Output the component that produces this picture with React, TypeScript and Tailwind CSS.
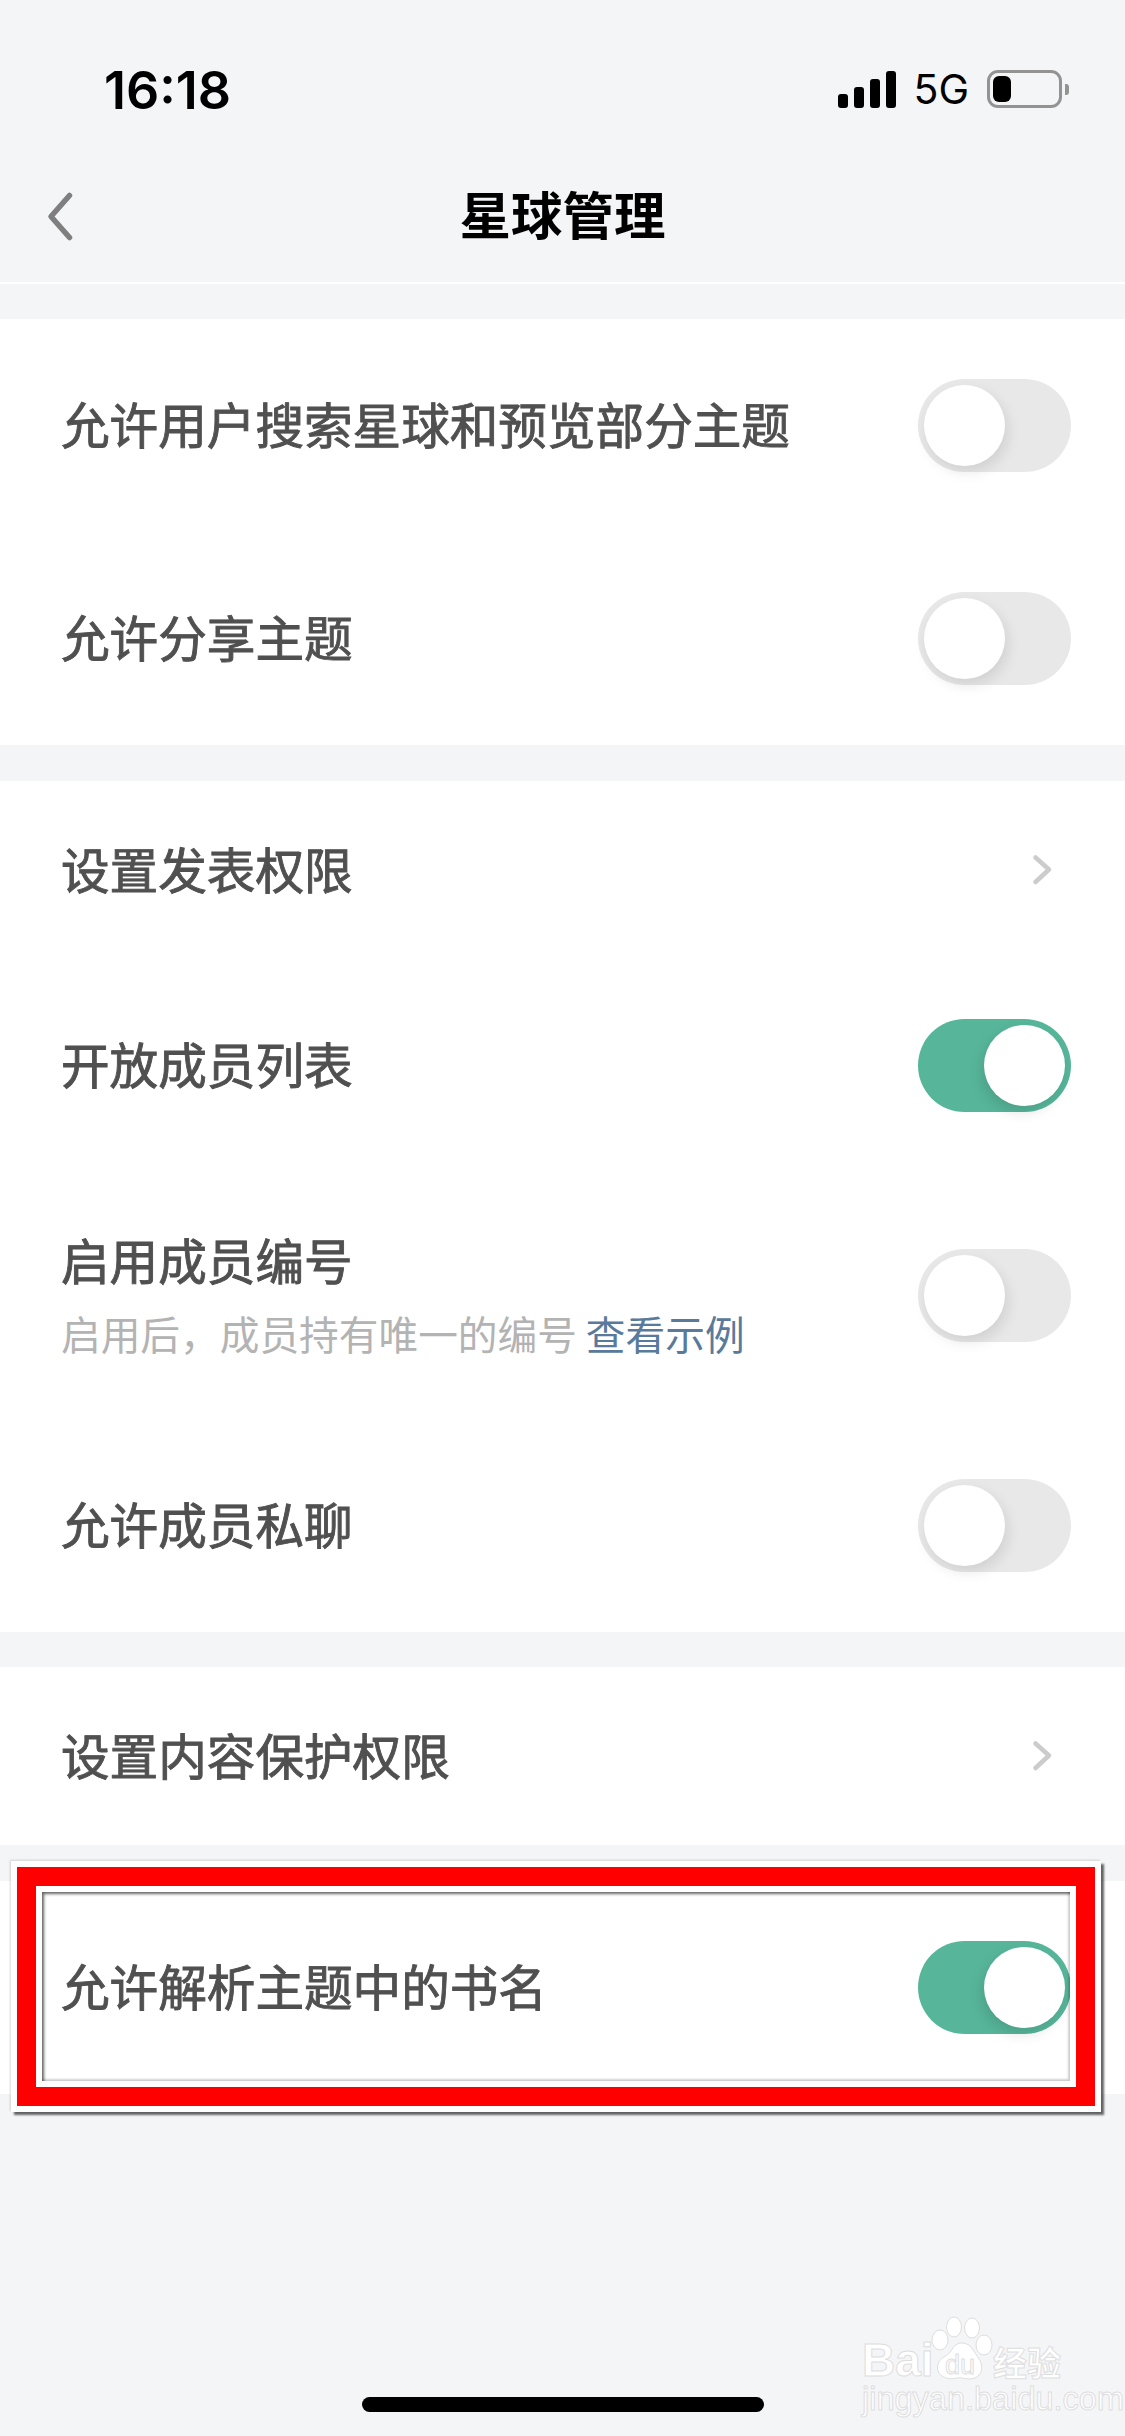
const font = "font-['Noto_Sans_CJK_SC','Noto_Sans',sans-serif]";

function Toggle({ on = false }: { on?: boolean }) {
  return (
    <div
      className={`relative h-[93px] w-[153px] shrink-0 rounded-full ${on ? "bg-[#57b69a]" : "bg-[#e8e8e8]"}`}
    >
      <div
        className={`absolute top-[6px] h-[81px] w-[81px] rounded-full bg-white ${
          on
            ? "right-[6px] shadow-[-3px_6px_14px_rgba(0,0,0,0.12)]"
            : "left-[6px] shadow-[3px_6px_14px_rgba(0,0,0,0.1)]"
        }`}
      />
    </div>
  );
}

function Chevron() {
  return (
    <svg width="22" height="32" viewBox="0 0 22 32" fill="none" className="mr-[17px]">
      <path d="M3.5 3.5 L17 15.5 L3.5 28" stroke="#cccccc" strokeWidth="4.5" strokeLinecap="round" strokeLinejoin="round" />
    </svg>
  );
}

function Row({
  label,
  h,
  on,
  chevron,
  children,
}: {
  label: string;
  h: string;
  on?: boolean;
  chevron?: boolean;
  children?: React.ReactNode;
}) {
  return (
    <div className={`flex items-center justify-between pl-[61px] pr-[54px] ${h}`}>
      <div className="-mt-[5px]">
        <div className="text-[48.6px] leading-[60px] text-[#505050] [-webkit-text-stroke:0.9px_#505050]">{label}</div>
        {children}
      </div>
      {chevron ? <Chevron /> : <Toggle on={on} />}
    </div>
  );
}

function StatusBar() {
  return (
    <div className="flex h-[172px] items-start justify-between pt-[63px] pl-[104px] pr-[63px]">
      <span className="font-['Inter',sans-serif] text-[52px] leading-[56px] font-semibold text-black">
        16:18
      </span>
      <div className="flex items-center pt-[7px]">
        <div className="flex items-end gap-[6px]">
          <div className="h-[14px] w-[10px] rounded-[3px] bg-black" />
          <div className="h-[21px] w-[10px] rounded-[3px] bg-black" />
          <div className="h-[29px] w-[10px] rounded-[3px] bg-black" />
          <div className="h-[37px] w-[10px] rounded-[3px] bg-black" />
        </div>
        <span className="ml-[17px] font-['Inter',sans-serif] text-[41px] leading-[38px] text-black">5G</span>
        <div className="relative ml-[18px] h-[38px] w-[75px] rounded-[11px] border-[3px] border-[#939393] p-[3px]">
          <div className="h-full w-[18px] rounded-[6px] bg-black" />
          <div className="absolute top-[11px] right-[-10px] h-[11px] w-[4px] rounded-r-[3px] bg-[#939393]" />
        </div>
      </div>
    </div>
  );
}

function Watermark() {
  return (
    <div className="pointer-events-none absolute top-[2316px] left-[860px] h-[96px] w-[206px] text-white [-webkit-text-stroke:1px_#dedede]">
      <span className="absolute top-[22px] left-[2px] font-['Liberation_Sans',sans-serif] text-[46px] leading-[44px] font-bold">
        Bai
      </span>
      <svg width="62" height="66" viewBox="0 0 62 66" className="absolute top-0 left-[71px]">
        <g fill="#ffffff" stroke="#dedede" strokeWidth="1">
          <ellipse cx="9" cy="24" rx="8" ry="10" />
          <ellipse cx="23" cy="11" rx="7.5" ry="10" />
          <ellipse cx="41" cy="12" rx="7.5" ry="10" />
          <ellipse cx="53" cy="29" rx="8" ry="10" />
          <path d="M31 27 C40 27 43 36 48 43 C54 52 50 63 38 63 C33 63 30 61 26 62 C14 65 4 58 7 48 C9 41 16 41 20 35 C23 30 26 27 31 27 Z" />
        </g>
      </svg>
      <span className="absolute top-[35px] left-[85px] font-['Liberation_Sans',sans-serif] text-[27px] leading-[28px]">
        du
      </span>
      <span className={`absolute top-[28px] left-[133px] text-[34px] leading-[36px] font-bold ${font}`}>经验</span>
      <span className="absolute top-[69px] left-[2px] font-['Liberation_Sans',sans-serif] text-[32.5px] leading-[28px]">
        jingyan.baidu.com
      </span>
    </div>
  );
}

export default function App() {
  return (
    <div className={`relative h-[2436px] w-[1125px] overflow-hidden bg-[#f4f5f7] ${font}`}>
      <header className="h-[284px] border-b-2 border-white">
        <StatusBar />
        <div className="relative flex h-[86px] items-center justify-center">
          <svg width="30" height="52" viewBox="0 0 30 52" fill="none" className="absolute top-[18px] left-[46px]">
            <path d="M23.5 5.5 L5 26.5 L23.5 47.5" stroke="#7f7f7f" strokeWidth="5.5" strokeLinecap="round" strokeLinejoin="round" />
          </svg>
          <h1 className="-mt-[4px] text-[51.5px] leading-[60px] font-bold text-black">星球管理</h1>
        </div>
      </header>

      <section className="mt-[35px] bg-white">
        <Row label="允许用户搜索星球和预览部分主题" h="h-[213px]" />
        <Row label="允许分享主题" h="h-[213px]" />
      </section>

      <section className="mt-[36px] bg-white">
        <Row label="设置发表权限" h="h-[178px]" chevron />
        <Row label="开放成员列表" h="h-[213px]" on />
        <Row label="启用成员编号" h="h-[246px]">
          <div className="mt-[20px] text-[39.7px] leading-[48px] text-[#b3b3b3]">
            启用后，成员持有唯一的编号 <span className="text-[#5a7a9c]">查看示例</span>
          </div>
        </Row>
        <Row label="允许成员私聊" h="h-[214px]" />
      </section>

      <section className="mt-[35px] bg-white">
        <Row label="设置内容保护权限" h="h-[178px]" chevron />
      </section>

      <section className="mt-[36px] bg-white">
        <Row label="允许解析主题中的书名" h="h-[213px]" on />
      </section>

      {/* red annotation box drawn on top of the last row */}
      <div className="absolute top-[1861px] left-[11px] h-[251px] w-[1090px] border-[6px] border-white shadow-[3px_3px_2px_rgba(0,0,0,0.6),-1px_-1px_2px_rgba(0,0,0,0.15)]">
        <div className="h-full w-full border-[19px] border-[#ff0000]">
          <div className="h-full w-full border-[6px] border-white">
            <div className="h-full w-full shadow-[inset_2px_2px_3px_rgba(0,0,0,0.6),inset_-2px_-2px_2px_rgba(0,0,0,0.18)]" />
          </div>
        </div>
      </div>

      <Watermark />

      <div className="absolute top-[2397px] left-[362px] h-[15px] w-[402px] rounded-full bg-black" />
    </div>
  );
}
